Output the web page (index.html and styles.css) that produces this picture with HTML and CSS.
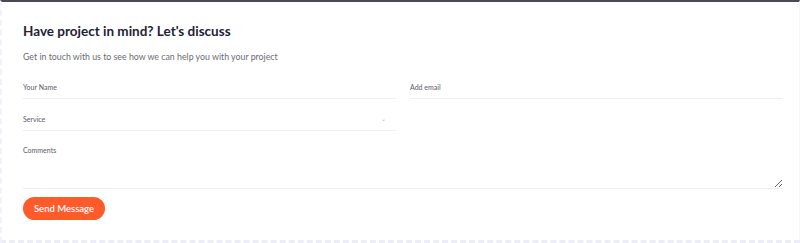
FILE: index.html
```html
<!DOCTYPE html>
<html lang="en">
<head>
    <meta charset="UTF-8">
    <meta name="viewport" content="width=device-width, initial-scale=1.0">
    <title>Contact</title>
    <link rel="stylesheet" href="styles.css">
</head>
<body>
    <div class="page">
        <section class="contact">
            <h2>Have project in mind? Let's discuss</h2>
            <p class="lead">Get in touch with us to see how we can help you with your project</p>
            <form class="form">
                <div class="row">
                    <input type="text" placeholder="Your Name">
                    <input type="email" placeholder="Add email">
                </div>
                <div class="row">
                    <div class="select">
                        <span>Service</span>
                        <span class="caret">&#8964;</span>
                    </div>
                    <div></div>
                </div>
                <textarea placeholder="Comments"></textarea>
                <button type="button">Send Message</button>
            </form>
        </section>
    </div>
</body>
</html>
```

FILE: styles.css
```css
html, body {
    margin: 0;
    height: 100%;
}
body {
    font-family: 'Lato', 'Liberation Sans', sans-serif;
    background: #ffffff;
    color: #1e2235;
}
.page {
    box-sizing: border-box;
    height: 243px;
    border-top: 2px solid #4a4a55;
    border-left: 2px dashed #f2f2fa;
    border-bottom: 3px dashed #ededf8;
    border-right: 1px solid #f5f5fa;
}
.contact {
    padding: 21px 16px 0 21px;
}
h2 {
    margin: 0;
    font-size: 13.5px;
    font-weight: 700;
    color: #1e2235;
}
.lead {
    margin: 12px 0 14px;
    font-size: 8.8px;
    color: #6b6b75;
}
.form {
    display: flex;
    flex-direction: column;
}
.row {
    display: grid;
    grid-template-columns: 1fr 1fr;
    gap: 14px;
}
input, .select, textarea {
    font-family: inherit;
    font-size: 7px;
    color: #555;
    border: none;
    border-bottom: 1px solid #efeff2;
    outline: none;
    padding: 0;
    background: transparent;
    box-sizing: border-box;
}
input {
    height: 23px;
    margin-bottom: 8px;
}
.select {
    display: flex;
    justify-content: space-between;
    align-items: center;
    height: 24px;
    padding-right: 10px;
    color: #5a5a66;
}
.caret {
    color: #b0b0b8;
    font-size: 6px;
}
input::placeholder, textarea::placeholder {
    color: #5a5a66;
}
textarea {
    margin-top: 14px;
    padding-top: 1px;
    height: 44px;
    resize: vertical;
    width: 100%;
}
button {
    align-self: flex-start;
    margin-top: 8px;
    width: 82px;
    height: 23px;
    border: none;
    border-radius: 12px;
    background: #ff5a2a;
    color: #ffffff;
    font-family: inherit;
    font-size: 9.5px;
    font-weight: 600;
}
```
